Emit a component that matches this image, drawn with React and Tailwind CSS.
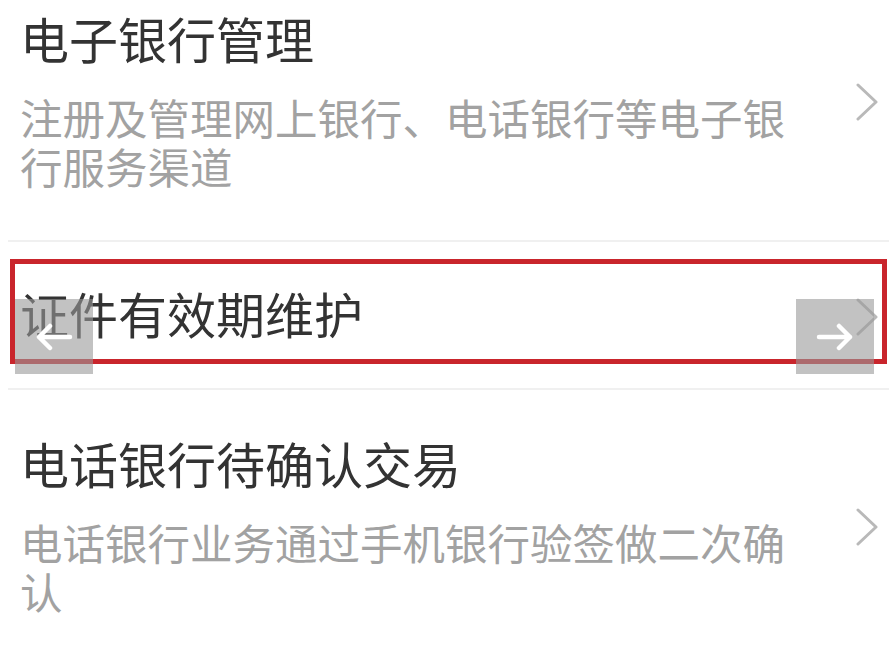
import React from 'react';

const items = [
  {
    title: '电子银行管理',
    desc: '注册及管理网上银行、电话银行等电子银行服务渠道',
    pt: 'pt-[14px]',
  },
  {
    title: '证件有效期维护',
    desc: null,
    pt: 'pt-[47px]',
    highlight: true,
  },
  {
    title: '电话银行待确认交易',
    desc: '电话银行业务通过手机银行验签做二次确认',
    pt: 'pt-[49px]',
  },
];

function Chevron() {
  return (
    <svg width="24" height="38" viewBox="0 0 24 38" className="shrink-0">
      <polyline points="3,2 21,19 3,36" fill="none" stroke="#b9b9b9" strokeWidth="3" strokeLinecap="round" strokeLinejoin="round" />
    </svg>
  );
}

function ArrowBox({ dir }) {
  return (
    <div className="w-[78px] h-[75px] bg-[#9a9a9a]/60 flex items-center justify-center">
      <svg width="38" height="28" viewBox="0 0 38 28">
        {dir === 'left' ? (
          <path d="M35 14H4M15 3L4 14l11 11" fill="none" stroke="#fff" strokeWidth="4.5" strokeLinecap="round" strokeLinejoin="round" />
        ) : (
          <path d="M3 14h31M23 3l11 11-11 11" fill="none" stroke="#fff" strokeWidth="4.5" strokeLinecap="round" strokeLinejoin="round" />
        )}
      </svg>
    </div>
  );
}

export default function App() {
  return (
    <div className="w-[889px] h-[653px] overflow-hidden bg-white relative" style={{ fontFamily: '"Noto Sans CJK SC", "Noto Sans", sans-serif' }}>
      {items.map((item, i) => (
        <div key={i}>
          {i > 0 && <div className="h-[2px] bg-[#f0f0f0] ml-[8px]" />}
          <div className={`relative ${item.pt} ${item.desc ? 'pb-[50px]' : 'pb-[51px]'} pl-[20px]`}>
            {item.desc ? (
              <>
                <div className="text-[49px] leading-[48px] text-[#333333]">{item.title}</div>
                <div className="flex items-start mt-[30px]">
                  <div className="w-[780px] text-[42.5px] leading-[49px] text-[#a2a2a2]">{item.desc}</div>
                  <div className="ml-[55px] -mt-[9px]">
                    <Chevron />
                  </div>
                </div>
              </>
            ) : (
              <div className="flex items-center">
                <div className="w-[835px] text-[49px] leading-[48px] text-[#333333]">{item.title}</div>
                <div className="mt-[8px]">
                  <Chevron />
                </div>
              </div>
            )}

            {item.highlight && (
              <>
                <div className="absolute left-[10px] right-[2px] top-[17px] h-[105px] border-[5px] border-[#c9252c]" />
                <div className="absolute left-[15px] top-[57px]">
                  <ArrowBox dir="left" />
                </div>
                <div className="absolute left-[796px] top-[57px]">
                  <ArrowBox dir="right" />
                </div>
              </>
            )}
          </div>
        </div>
      ))}
    </div>
  );
}
